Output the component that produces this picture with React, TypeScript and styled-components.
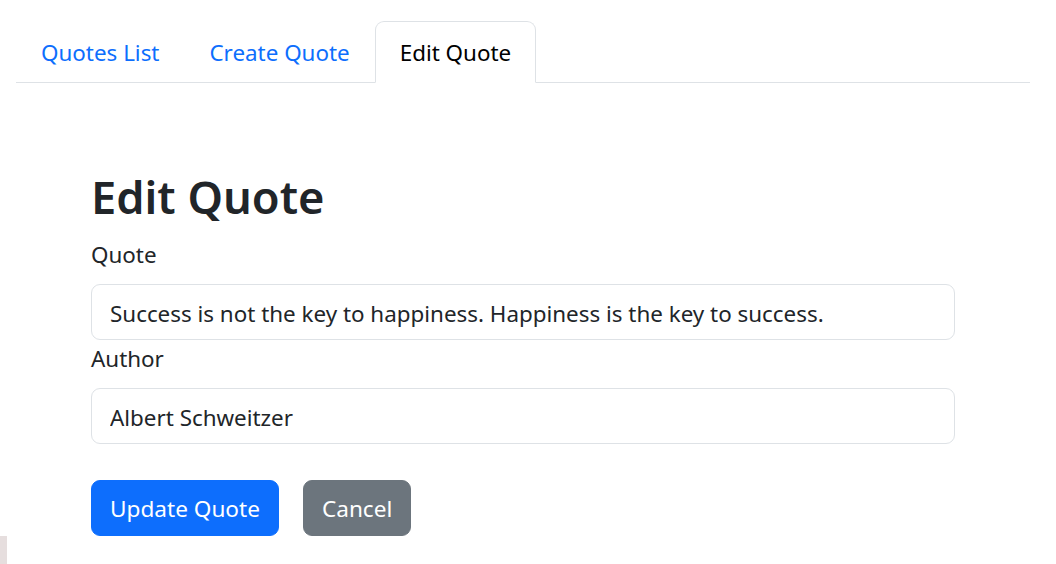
import React from "react";
import styled, { createGlobalStyle } from "styled-components";

const Global = createGlobalStyle`
  html, body { margin: 0; padding: 0; background: #fff; }
  body {
    font-family: "Noto Sans", "Open Sans", "Liberation Sans", sans-serif;
    color: #212529;
    font-size: 22.4px;
    line-height: 1.5;
  }
  * { box-sizing: border-box; }
`;

const Page = styled.div`
  padding: 21px 26px 0 16px;
  min-height: 564px;
`;

const Tabs = styled.nav`
  display: flex;
  border-bottom: 1px solid #dee2e6;
`;

const Tab = styled.a<{ $active?: boolean }>`
  display: block;
  padding: 13px 24px 11px;
  margin-bottom: -1px;
  font-size: 22.4px;
  line-height: 36px;
  text-decoration: none;
  cursor: pointer;
  border: 1px solid ${(p) => (p.$active ? "#dee2e6" : "transparent")};
  border-bottom-color: ${(p) => (p.$active ? "#fff" : "transparent")};
  border-radius: 9px 9px 0 0;
  background: ${(p) => (p.$active ? "#fff" : "transparent")};
  color: ${(p) => (p.$active ? "#000" : "#0d6efd")};
`;

const Container = styled.main`
  max-width: 864px;
  margin: 0 auto;
  padding-top: 84px;
`;

const Title = styled.h1`
  margin: 0 0 10px;
  font-size: 45.2px;
  line-height: 59px;
  font-weight: 600;
  color: #212529;
`;

const Form = styled.form`
  display: flex;
  flex-direction: column;
`;

const Label = styled.label`
  display: block;
  margin-bottom: 12px;
  padding-top: 2px;
  font-size: 22.4px;
  line-height: 34px;
`;

const Input = styled.input`
  display: block;
  width: 100%;
  height: 56px;
  padding: 10px 18px 8px;
  font-family: inherit;
  font-size: 22.4px;
  line-height: 36px;
  color: #212529;
  background: #fff;
  border: 1px solid #dee2e6;
  border-radius: 9px;
  outline: none;
`;

const Actions = styled.div`
  display: flex;
  gap: 24px;
  margin-top: 36px;
`;

const Button = styled.button<{ $variant: "primary" | "secondary" }>`
  height: 56px;
  padding: 10px 18px 8px;
  font-family: inherit;
  font-size: 22.6px;
  line-height: 36px;
  color: #fff;
  border: 1px solid ${(p) => (p.$variant === "primary" ? "#0d6efd" : "#6c757d")};
  background: ${(p) => (p.$variant === "primary" ? "#0d6efd" : "#6c757d")};
  border-radius: 9px;
  cursor: pointer;
`;

const EdgeMark = styled.div`
  position: fixed;
  left: 0;
  bottom: 0;
  width: 7px;
  height: 28px;
  background: #e6dede;
`;

export default function App() {
  return (
    <>
      <Global />
      <Page>
        <Tabs>
          <Tab>Quotes List</Tab>
          <Tab>Create Quote</Tab>
          <Tab $active>Edit Quote</Tab>
        </Tabs>
        <Container>
          <Title>Edit Quote</Title>
          <Form onSubmit={(e) => e.preventDefault()}>
            <Label htmlFor="quote">Quote</Label>
            <Input
              id="quote"
              defaultValue="Success is not the key to happiness. Happiness is the key to success."
            />
            <Label htmlFor="author">Author</Label>
            <Input id="author" defaultValue="Albert Schweitzer" />
            <Actions>
              <Button type="submit" $variant="primary">Update Quote</Button>
              <Button type="button" $variant="secondary">Cancel</Button>
            </Actions>
          </Form>
        </Container>
      </Page>
      <EdgeMark />
    </>
  );
}
